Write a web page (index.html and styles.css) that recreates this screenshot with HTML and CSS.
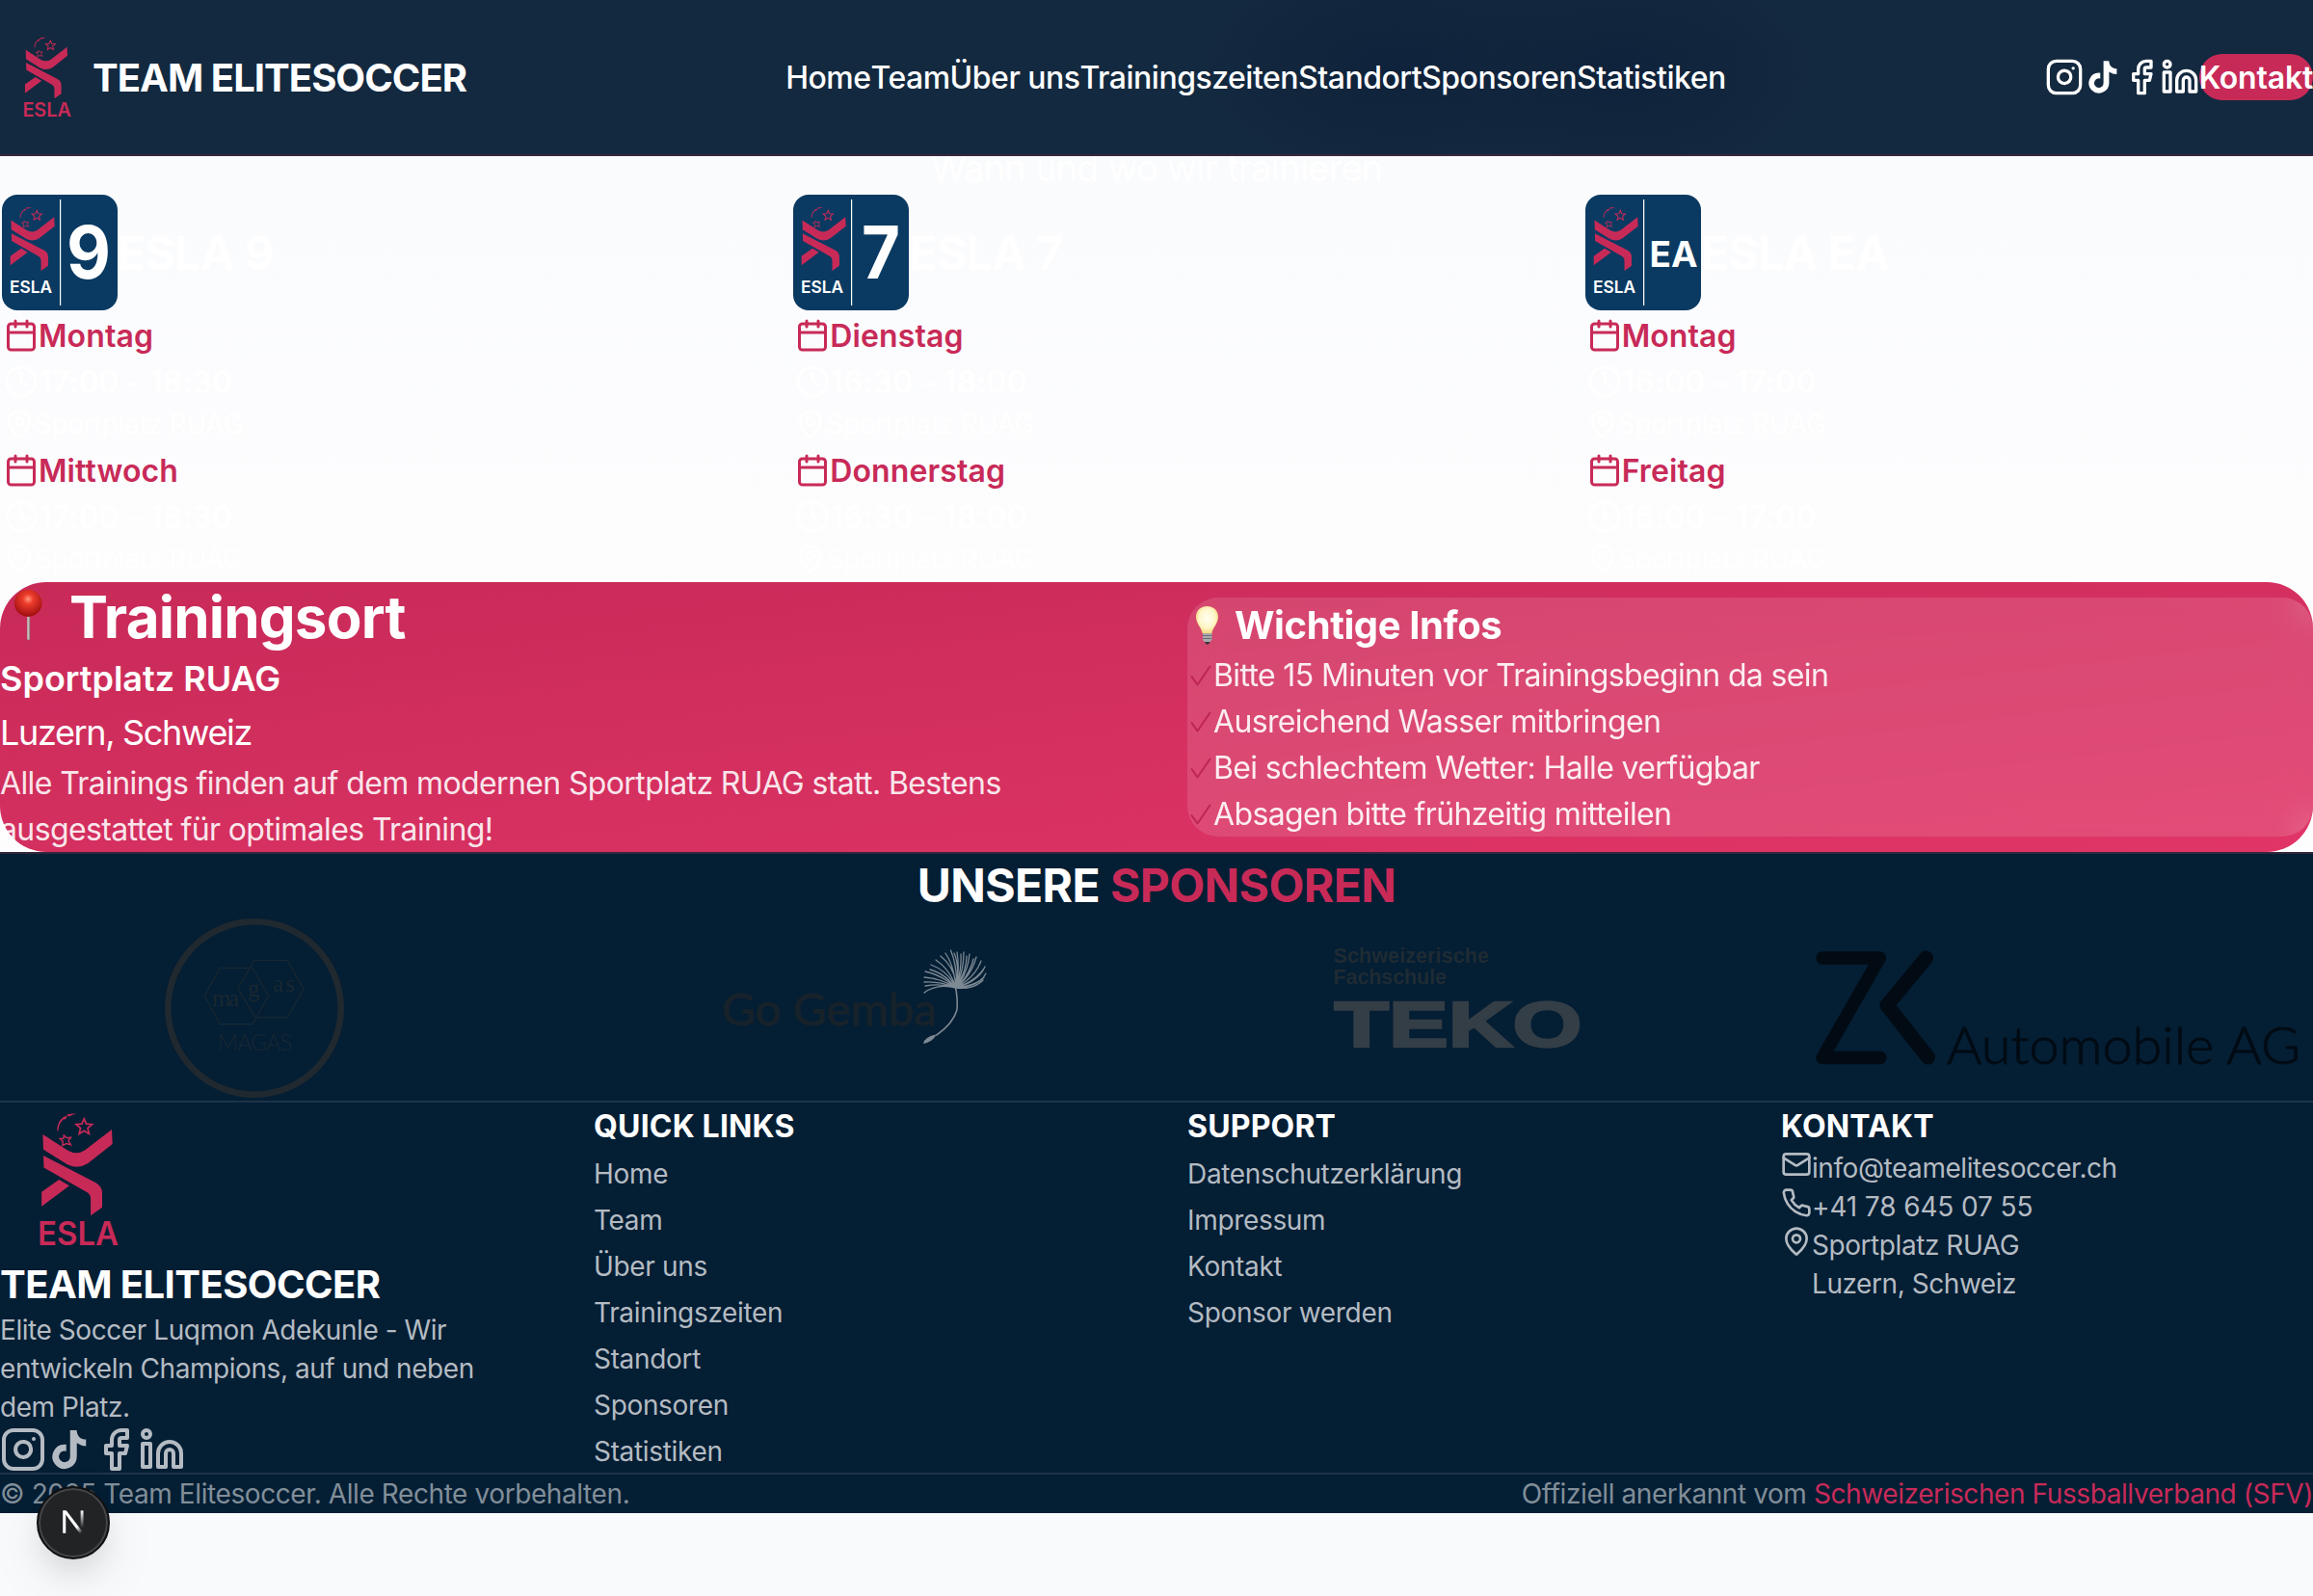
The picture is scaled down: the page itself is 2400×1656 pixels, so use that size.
FILE: index.html
```html
<!DOCTYPE html>
<html lang="de">
<head>
<meta charset="utf-8">
<title>Team Elitesoccer</title>
<link rel="stylesheet" href="styles.css">
</head>
<body>
<svg class="defs" aria-hidden="true">
  <symbol id="figure" viewBox="0 0 160 160">
    <path d="M44.4 33 L70 49.5 Q79.5 55 88 49.5 L116 28 L116.7 43 L91 63.3 Q80 70 69.5 64 L45 48.7Z"/>
    <path d="M45 55 L99.5 83.2 Q106 87 106 94 L106 108.8 L94.1 117.2 L94.1 99.5 Q94.1 95.5 90.5 93.2 L45.5 67.5Z"/>
    <path d="M61.2 80 L72 86.3 L43.2 107.8 L43.2 92.7Z"/>
    <path d="M87.3 16.8 L89.6 22.2 L95.6 22.6 L91 26.5 L92.4 32.4 L87.3 29.2 L82.2 32.4 L83.6 26.5 L79 22.6 L85 22.2Z" fill="none" stroke="currentColor" stroke-width="1.7"/>
    <path d="M66.3 34 L69 36.6 L73.5 36.2 L71 39.6 L73.5 43.8 L68.8 42.6 L64.8 44.6 L65.4 40.4 L62.2 37.4 L66 37.3Z" fill="none" stroke="currentColor" stroke-width="1.4"/>
    <path d="M59.2 29.6 Q59 20 66 15 L70 13.4 L68 17.5 L66 17.2 Q61 21 60.4 29Z M69 12.8 Q74 11 79.4 11.6 Q75 12.4 71.5 14.5Z"/>
  </symbol>
  <symbol id="instagram" viewBox="0 0 24 24"><rect width="20" height="20" x="2" y="2" rx="5"/><path d="M16 11.37A4 4 0 1 1 12.63 8 4 4 0 0 1 16 11.37z"/><path d="M17.5 6.5h.01"/></symbol>
  <symbol id="tiktok" viewBox="0 0 24 24"><path fill="currentColor" stroke="none" d="M19.59 6.69a4.83 4.83 0 0 1-3.77-4.25V2h-3.45v13.67a2.89 2.89 0 0 1-5.2 1.74 2.89 2.89 0 0 1 2.31-4.64 2.93 2.93 0 0 1 .88.13V9.4a6.84 6.84 0 0 0-1-.05A6.33 6.33 0 0 0 5 20.1a6.34 6.34 0 0 0 10.86-4.43v-7a8.16 8.16 0 0 0 4.77 1.52v-3.4a4.85 4.85 0 0 1-1-.1z"/></symbol>
  <symbol id="facebook" viewBox="0 0 24 24"><path d="M18 2h-3a5 5 0 0 0-5 5v3H7v4h3v8h4v-8h3l1-4h-4V7a1 1 0 0 1 1-1h3z"/></symbol>
  <symbol id="linkedin" viewBox="0 0 24 24"><path d="M16 8a6 6 0 0 1 6 6v7h-4v-7a2 2 0 0 0-2-2 2 2 0 0 0-2 2v7h-4v-7a6 6 0 0 1 6-6z"/><rect width="4" height="12" x="2" y="9"/><circle cx="4" cy="4" r="2"/></symbol>
  <symbol id="calendar" viewBox="0 0 24 24"><path d="M8 2v4M16 2v4M3 10h18"/><rect width="18" height="18" x="3" y="4" rx="2"/></symbol>
  <symbol id="clock" viewBox="0 0 24 24"><circle cx="12" cy="12" r="10"/><path d="M12 6v6l4 2"/></symbol>
  <symbol id="pin" viewBox="0 0 24 24"><path d="M20 10c0 4.993-5.539 10.193-7.399 11.799a1 1 0 0 1-1.202 0C9.539 20.193 4 14.993 4 10a8 8 0 0 1 16 0"/><circle cx="12" cy="10" r="3"/></symbol>
  <symbol id="mail" viewBox="0 0 24 24"><rect width="20" height="16" x="2" y="4" rx="2"/><path d="m22 7-8.97 5.7a1.94 1.94 0 0 1-2.06 0L2 7"/></symbol>
  <symbol id="phone" viewBox="0 0 24 24"><path d="M22 16.92v3a2 2 0 0 1-2.18 2 19.79 19.79 0 0 1-8.63-3.07 19.5 19.5 0 0 1-6-6 19.79 19.79 0 0 1-3.07-8.67A2 2 0 0 1 4.11 2h3a2 2 0 0 1 2 1.72 12.84 12.84 0 0 0 .7 2.81 2 2 0 0 1-.45 2.11L8.09 9.91a16 16 0 0 0 6 6l1.27-1.27a2 2 0 0 1 2.11-.45 12.84 12.84 0 0 0 2.81.7A2 2 0 0 1 22 16.92z"/></symbol>
  <symbol id="check" viewBox="0 0 27 48"><path d="M4.5 26 L10.5 34.5 L23.5 15.5" stroke-width="2"/></symbol>
  <linearGradient id="fade" x1="0" y1="0" x2="0" y2="1"><stop offset="0" stop-color="#fff"/><stop offset="1" stop-color="#fff" stop-opacity="0"/></linearGradient>
  <linearGradient id="fadeDiag" gradientUnits="userSpaceOnUse" x1="14" y1="16" x2="28" y2="33"><stop offset="0" stop-color="#fff"/><stop offset=".6" stop-color="#fff"/><stop offset="1" stop-color="#fff" stop-opacity="0"/></linearGradient>
  <radialGradient id="pinHead" cx=".5" cy=".35" r=".6"><stop offset="0" stop-color="#ff9a80"/><stop offset=".3" stop-color="#ee3d2c"/><stop offset="1" stop-color="#a51212"/></radialGradient>
  <radialGradient id="bulbGlass" cx=".5" cy=".45" r=".6"><stop offset="0" stop-color="#fffef2"/><stop offset=".6" stop-color="#fff6c8"/><stop offset="1" stop-color="#f0cf6a"/></radialGradient>
</svg>

<header class="header">
  <a class="brand"><svg class="brand-logo" viewBox="0 0 160 160"><use href="#figure" width="160" height="160"/><text x="39" y="148.4" font-size="34" font-weight="600" textLength="84" lengthAdjust="spacingAndGlyphs">ESLA</text></svg><span class="brand-name">TEAM ELITESOCCER</span></a>
  <nav class="nav"><a>Home</a><a>Team</a><a>Über uns</a><a>Trainingszeiten</a><a>Standort</a><a>Sponsoren</a><a>Statistiken</a></nav>
  <div class="actions">
    <svg class="icon i40"><use href="#instagram"/></svg><svg class="icon i40"><use href="#tiktok"/></svg><svg class="icon i40"><use href="#facebook"/></svg><svg class="icon i40"><use href="#linkedin"/></svg>
    <a class="cta">Kontakt</a>
  </div>
</header>

<main class="training">
  <p class="subtitle">Wann und wo wir trainieren</p>
  <div class="teams">
    <article class="team">
      <div class="team-head">
        <svg class="badge" viewBox="0 0 120 120"><rect class="badge-bg" width="120" height="120" rx="16"/><use class="pink" href="#figure" x="-18.3" y="5.8" width="100" height="100"/><text x="8" y="101.7" font-size="17.5" font-weight="600" textLength="44" lengthAdjust="spacingAndGlyphs">ESLA</text><rect x="60" y="5" width="1.2" height="110"/><text x="67" y="86.5" font-size="76" font-weight="700" textLength="46" lengthAdjust="spacingAndGlyphs">9</text></svg>
        <h3>ESLA 9</h3>
      </div>
      <div class="slot"><div class="day"><svg class="icon i36"><use href="#calendar"/></svg>Montag</div><div class="time"><svg class="icon i36"><use href="#clock"/></svg>17:00 - 18:30</div><div class="place"><svg class="icon i32"><use href="#pin"/></svg>Sportplatz RUAG</div></div>
      <div class="slot"><div class="day"><svg class="icon i36"><use href="#calendar"/></svg>Mittwoch</div><div class="time"><svg class="icon i36"><use href="#clock"/></svg>17:00 - 18:30</div><div class="place"><svg class="icon i32"><use href="#pin"/></svg>Sportplatz RUAG</div></div>
    </article>
    <article class="team">
      <div class="team-head">
        <svg class="badge" viewBox="0 0 120 120"><rect class="badge-bg" width="120" height="120" rx="16"/><use class="pink" href="#figure" x="-18.3" y="5.8" width="100" height="100"/><text x="8" y="101.7" font-size="17.5" font-weight="600" textLength="44" lengthAdjust="spacingAndGlyphs">ESLA</text><rect x="60" y="5" width="1.2" height="110"/><text x="71" y="86.5" font-size="76" font-weight="700" textLength="40" lengthAdjust="spacingAndGlyphs">7</text></svg>
        <h3>ESLA 7</h3>
      </div>
      <div class="slot"><div class="day"><svg class="icon i36"><use href="#calendar"/></svg>Dienstag</div><div class="time"><svg class="icon i36"><use href="#clock"/></svg>16:30 - 18:00</div><div class="place"><svg class="icon i32"><use href="#pin"/></svg>Sportplatz RUAG</div></div>
      <div class="slot"><div class="day"><svg class="icon i36"><use href="#calendar"/></svg>Donnerstag</div><div class="time"><svg class="icon i36"><use href="#clock"/></svg>16:30 - 18:00</div><div class="place"><svg class="icon i32"><use href="#pin"/></svg>Sportplatz RUAG</div></div>
    </article>
    <article class="team">
      <div class="team-head">
        <svg class="badge" viewBox="0 0 120 120"><rect class="badge-bg" width="120" height="120" rx="16"/><use class="pink" href="#figure" x="-18.3" y="5.8" width="100" height="100"/><text x="8" y="101.7" font-size="17.5" font-weight="600" textLength="44" lengthAdjust="spacingAndGlyphs">ESLA</text><rect x="60" y="5" width="1.2" height="110"/><text x="66.5" y="74.7" font-size="37.5" font-weight="700" textLength="50" lengthAdjust="spacingAndGlyphs">EA</text></svg>
        <h3>ESLA EA</h3>
      </div>
      <div class="slot"><div class="day"><svg class="icon i36"><use href="#calendar"/></svg>Montag</div><div class="time"><svg class="icon i36"><use href="#clock"/></svg>16:00 - 17:00</div><div class="place"><svg class="icon i32"><use href="#pin"/></svg>Sportplatz RUAG</div></div>
      <div class="slot"><div class="day"><svg class="icon i36"><use href="#calendar"/></svg>Freitag</div><div class="time"><svg class="icon i36"><use href="#clock"/></svg>16:00 - 17:00</div><div class="place"><svg class="icon i32"><use href="#pin"/></svg>Sportplatz RUAG</div></div>
    </article>
  </div>
  <section class="location">
    <div class="venue">
      <h2><svg class="emoji-pin" viewBox="0 0 74 72"><rect x="28.8" y="32" width="3.2" height="29" rx="1.4" fill="#9b8d8d"/><rect x="29.4" y="32" width="1.2" height="28" fill="#d8cfcf"/><ellipse cx="30" cy="21.5" rx="14.7" ry="14.5" fill="url(#pinHead)"/></svg>Trainingsort</h2>
      <p class="venue-name">Sportplatz RUAG</p>
      <p class="venue-city">Luzern, Schweiz</p>
      <p class="venue-text">Alle Trainings finden auf dem modernen Sportplatz RUAG statt. Bestens<br>ausgestattet für optimales Training!</p>
    </div>
    <div class="infos">
      <h3><svg class="emoji-bulb" viewBox="0 0 49 56"><path d="M20.5 9 C28 9 32 14 32 20 C32 27 26.5 31 25.5 37 L15.5 37 C14.5 31 9 27 9 20 C9 14 13 9 20.5 9Z" fill="url(#bulbGlass)"/><path d="M16 37h9.5v7l-2 2h-5.5l-2-2z" fill="#a9a9ad"/><path d="M16 39.5h9.5M16 42.5h9.5" stroke="#6e6e74" stroke-width="1"/><path d="M18 46h5.5l-1.5 2.5h-2.5z" fill="#39323a"/></svg>Wichtige Infos</h3>
      <ul>
        <li><svg class="icon check"><use href="#check"/></svg>Bitte 15 Minuten vor Trainingsbeginn da sein</li>
        <li><svg class="icon check"><use href="#check"/></svg>Ausreichend Wasser mitbringen</li>
        <li><svg class="icon check"><use href="#check"/></svg>Bei schlechtem Wetter: Halle verfügbar</li>
        <li><svg class="icon check"><use href="#check"/></svg>Absagen bitte frühzeitig mitteilen</li>
      </ul>
    </div>
  </section>
</main>

<section class="sponsors">
  <h2>UNSERE <span>SPONSOREN</span></h2>
  <div class="sponsor-row">
    <svg viewBox="0 0 528 192">
      <circle cx="264" cy="96" r="89.7" fill="none" stroke="#20292f" stroke-width="6.6"/>
      <g transform="translate(168 0)" fill="none" stroke="#172832" stroke-width="1.3">
        <path d="M44.2 83.3L60.2 54.3H94L110.6 83.3L94 112.7H60.2Z"/>
        <path d="M78.7 76L95.9 46.3H130.3L147 76L130.3 105.7H97.2Z"/>
      </g>
      <g class="magas">
        <text x="220" y="94.3" textLength="28">ma</text><text x="257" y="84">g</text><text x="283" y="78.7" textLength="23">as</text>
      </g>
      <text class="magas-name" x="226" y="140.3" textLength="77">MAGAS</text>
    </svg>
    <svg viewBox="0 0 528 192">
      <text class="gemba" x="125" y="114.3" textLength="223" lengthAdjust="spacingAndGlyphs">Go Gemba</text>
      <g fill="none" stroke="#7d8993" stroke-width="1.3" stroke-linecap="round">
        <path d="M367.6 75Q370 88 368.9 98Q365 112 347.8 124" stroke-width="1.6"/>
        <path d="M368 75Q370 55 362.5 36M368 75Q368 55 352 42M368 75Q372 55 369 38M368 75Q376 57 376 38M368 75Q380 60 382 40M368 75Q384 62 389 43M368 75Q388 64 394 47M368 75Q392 68 398 53M368 75Q394 72 399 60M368 75Q386 77 396 67M368 75Q362 56 347 46M368 75Q360 58 342 51M368 75Q356 60 341 56M368 75Q354 62 336 58M368 75Q352 65 335 64M368 75Q352 68 335 69M368 75Q352 70 336 73M368 75Q348 70 335 80M368 75Q366 52 357 39M368 75Q372 52 366 39M368 75Q374 55 373 40M368 75Q379 57 379 42M368 75Q382 62 386 45M368 75Q388 68 396 56M368 75Q388 74 397 64"/>
      </g>
      <path d="M347.8 123.3Q344 131 334 133Q335 126 347.8 123.3Z" fill="#7d8993"/>
    </svg>
    <svg viewBox="0 0 528 192">
      <text class="teko-line" x="135.5" y="48.7" textLength="161.5">Schweizerische</text>
      <text class="teko-line" x="135.5" y="70.7" textLength="117.5">Fachschule</text>
      <text class="teko" x="136.5" y="135.7" textLength="257" lengthAdjust="spacingAndGlyphs">TEKO</text>
    </svg>
    <svg viewBox="0 0 528 192">
      <g fill="none" stroke="#020b13" stroke-width="13.3" stroke-linejoin="round" stroke-linecap="round">
        <path d="M19 44H78.5L19 147.5H79"/>
        <path d="M126.5 44L86 93L128.5 147" stroke-width="15"/>
      </g>
      <text class="zk-name" x="148" y="153.7" textLength="367" lengthAdjust="spacingAndGlyphs">Automobile AG</text>
    </svg>
  </div>
</section>

<footer class="footer">
  <div class="footer-grid">
    <div>
      <svg class="footer-logo" viewBox="0 0 160 160"><use href="#figure" width="160" height="160"/><text x="39" y="148.4" font-size="34" font-weight="600" textLength="84" lengthAdjust="spacingAndGlyphs">ESLA</text></svg>
      <h3>TEAM ELITESOCCER</h3>
      <p class="about">Elite Soccer Luqmon Adekunle - Wir<br>entwickeln Champions, auf und neben<br>dem Platz.</p>
      <div class="social"><svg class="icon i48"><use href="#instagram"/></svg><svg class="icon i48"><use href="#tiktok"/></svg><svg class="icon i48"><use href="#facebook"/></svg><svg class="icon i48"><use href="#linkedin"/></svg></div>
    </div>
    <div>
      <h4>QUICK LINKS</h4>
      <ul class="links"><li><a>Home</a></li><li><a>Team</a></li><li><a>Über uns</a></li><li><a>Trainingszeiten</a></li><li><a>Standort</a></li><li><a>Sponsoren</a></li><li><a>Statistiken</a></li></ul>
    </div>
    <div>
      <h4>SUPPORT</h4>
      <ul class="links"><li><a>Datenschutzerklärung</a></li><li><a>Impressum</a></li><li><a>Kontakt</a></li><li><a>Sponsor werden</a></li></ul>
    </div>
    <div>
      <h4>KONTAKT</h4>
      <ul class="contact">
        <li><svg class="icon i32"><use href="#mail"/></svg><span>info@teamelitesoccer.ch</span></li>
        <li><svg class="icon i32"><use href="#phone"/></svg><span class="tel">+41 78 645 07 55</span></li>
        <li><svg class="icon i32"><use href="#pin"/></svg><span>Sportplatz RUAG<br>Luzern, Schweiz</span></li>
      </ul>
    </div>
  </div>
  <div class="legal"><p>© 2025 Team Elitesoccer. Alle Rechte vorbehalten.</p><p>Offiziell anerkannt vom <a>Schweizerischen Fussballverband (SFV)</a></p></div>
</footer>

<div class="dev-badge"><svg viewBox="0 0 40 40"><rect x="8" y="6" width="3.4" height="26" fill="#fff"/><rect x="28.5" y="6" width="3.2" height="20" fill="url(#fade)"/><path d="M8 6h4.2L35 36l-3.2 2z" fill="url(#fadeDiag)"/></svg></div>
</body>
</html>
```
FILE: styles.css
```css
* { box-sizing: border-box; margin: 0; padding: 0; }

body {
  font-family: Inter, "Noto Sans", sans-serif;
  font-size: 32px;
  line-height: 48px;
  color: #fff;
  background: #f9fafc;
  width: 2400px;
  height: 1656px;
  overflow: hidden;
  letter-spacing: -0.64px;
}
ul { list-style: none; }
svg { display: block; flex: none; overflow: visible; }
svg text { font-family: Inter, sans-serif; letter-spacing: 0; }
.defs { position: absolute; width: 0; height: 0; }

.icon { fill: none; stroke: currentColor; stroke-width: 2; stroke-linecap: round; stroke-linejoin: round; }
.i32 { width: 32px; height: 32px; }
.i36 { width: 36px; height: 36px; }
.i40 { width: 40px; height: 40px; }
.i48 { width: 48px; height: 48px; }

/* Header */
.header {
  position: relative;
  z-index: 1;
  display: flex;
  align-items: center;
  justify-content: space-between;
  height: 162px;
  border-bottom: 2px solid #3a2541;
  background:
    radial-gradient(ellipse 200px 110px at 1450px 70px, #0f223b, transparent),
    radial-gradient(ellipse 200px 110px at 1680px 75px, #0f223b, transparent),
    #13293f;
}
.brand { display: flex; align-items: center; }
.brand-logo { width: 96px; height: 96px; fill: #c82a58; color: #c82a58; }
.brand-name { padding-top: 2px; font-size: 40px; font-weight: 700; letter-spacing: -0.96px; }
.nav { display: flex; padding-top: 2px; font-weight: 500; letter-spacing: -0.5px; }
.actions { display: flex; align-items: center; }
.cta { height: 48px; line-height: 50px; background: #c82a58; border-radius: 24px; font-weight: 600; letter-spacing: -0.2px; }

/* Training times */
.training { background: linear-gradient(#fafbfd, #fdfdfe 442px); }
.subtitle { height: 38px; font-size: 38px; line-height: 56px; margin-top: -16px; margin-bottom: -2px; text-align: center; letter-spacing: -0.8px; }
.training::before { content: ""; display: table; }
.teams { display: grid; grid-template-columns: repeat(3, 1fr); gap: 64px; padding-top: 18px; }
.team { border: 2px solid rgba(255, 255, 255, .2); }
.team-head { display: flex; align-items: center; }
.team-head h3 { padding-top: 2px; font-size: 48px; line-height: 64px; font-weight: 700; }
.badge { width: 120px; height: 120px; fill: #fff; }
.badge-bg { fill: #0a3a62; }
.pink { fill: #c82a58; color: #c82a58; }
.slot { border: 2px solid rgba(255, 255, 255, .2); }
.day, .time { display: flex; align-items: flex-start; height: 48px; line-height: 50px; font-weight: 600; letter-spacing: 0.1px; }
.day .icon, .time .icon { margin-top: 6px; }
.day { color: #c82a58; }
.place { display: flex; align-items: center; font-size: 28px; line-height: 40px; letter-spacing: -0.4px; color: #fff; }

.location {
  display: grid;
  grid-template-columns: 1fr 1fr;
  gap: 64px;
  align-items: center;
  border-radius: 48px;
  background: linear-gradient(to bottom right, #c82a58, #e03566);
}
.venue h2 { display: flex; font-size: 60px; line-height: 72px; font-weight: 700; letter-spacing: -0.8px; }
.emoji-pin { width: 72px; height: 72px; }
.venue-name { font-size: 36px; line-height: 56px; font-weight: 600; letter-spacing: 0; }
.venue-city { font-size: 36px; line-height: 56px; letter-spacing: -1.35px; }
.venue-text { height: 96px; padding-top: 1px; color: rgba(255, 255, 255, .9); letter-spacing: -0.62px; }
.infos { border-radius: 32px; background: rgba(255, 255, 255, .12); backdrop-filter: blur(16px); }
.infos h3 { display: flex; height: 56px; font-size: 40px; line-height: 58px; font-weight: 700; letter-spacing: -0.4px; }
.emoji-bulb { width: 49px; height: 56px; }
.infos li { display: flex; height: 48px; line-height: 50px; color: rgba(255, 255, 255, .9); }
.check { width: 27px; height: 48px; color: #bd2552; }

/* Sponsors */
.sponsors { background: #041e34; border-top: 2px solid #33283f; }
.sponsors h2 { height: 64px; font-size: 48px; line-height: 66px; font-weight: 700; text-align: center; letter-spacing: -0.6px; }
.sponsors h2 span { color: #c82a58; }
.sponsor-row { display: grid; grid-template-columns: repeat(4, 1fr); gap: 96px; }
.sponsor-row svg { width: 528px; height: 192px; }
.magas text { font-family: "Liberation Serif", serif; font-size: 25px; fill: #192831; }
.sponsor-row .magas-name { font-family: Lato, sans-serif; font-weight: 300; font-size: 23px; fill: #192831; }
.sponsor-row .gemba { font-family: Lato, sans-serif; font-size: 47px; fill: #17222a; stroke: #17222a; stroke-width: 1px; }
.sponsor-row .teko-line { font-family: "Liberation Sans", Arial, sans-serif; font-weight: 700; font-size: 21.5px; fill: #1f2b33; }
.sponsor-row .teko { font-family: "Liberation Sans", Arial, sans-serif; font-weight: 700; font-size: 67px; fill: #343e46; stroke: #343e46; stroke-width: 2.5px; }
.sponsor-row .zk-name { font-family: Lato, sans-serif; font-weight: 300; font-size: 54px; fill: #020b13; stroke: #020b13; stroke-width: .8px; }

/* Footer */
.footer { background: #041e34; border-top: 2px solid #1d3447; }
.footer-grid { display: grid; grid-template-columns: repeat(4, 1fr); gap: 64px; }
.footer-logo { width: 160px; height: 160px; fill: #c82a58; color: #c82a58; }
.footer h3 { height: 56px; font-size: 40px; line-height: 58px; font-weight: 700; letter-spacing: -0.56px; }
.footer h4 { height: 48px; font-size: 32px; line-height: 50px; font-weight: 700; letter-spacing: 0.18px; }
.about, .contact { font-size: 28px; line-height: 40px; color: #b4bbc2; letter-spacing: -0.44px; }
.contact .tel { letter-spacing: -0.12px; }
.social { display: flex; color: #b4bbc2; }
.links li { height: 48px; line-height: 50px; }
.links a { font-size: 28px; color: #b4bbc2; letter-spacing: -0.33px; }
.contact li { display: flex; align-items: flex-start; }
.legal { display: flex; justify-content: space-between; border-top: 2px solid #1d3447; font-size: 28px; line-height: 40px; color: #818e99; letter-spacing: -0.41px; }
.legal a { color: #c82a58; }

.dev-badge {
  position: absolute;
  left: 38px;
  top: 1542px;
  width: 76px;
  height: 76px;
  padding: 18px;
  border-radius: 50%;
  background: #222325;
  border: 2px solid #111;
  box-shadow: inset 0 0 0 2px #46474a, 0 16px 32px -8px rgba(0, 0, 0, .12), 0 20px 60px rgba(0, 0, 0, .08);
}
.dev-badge svg { width: 36px; height: 36px; }
```
